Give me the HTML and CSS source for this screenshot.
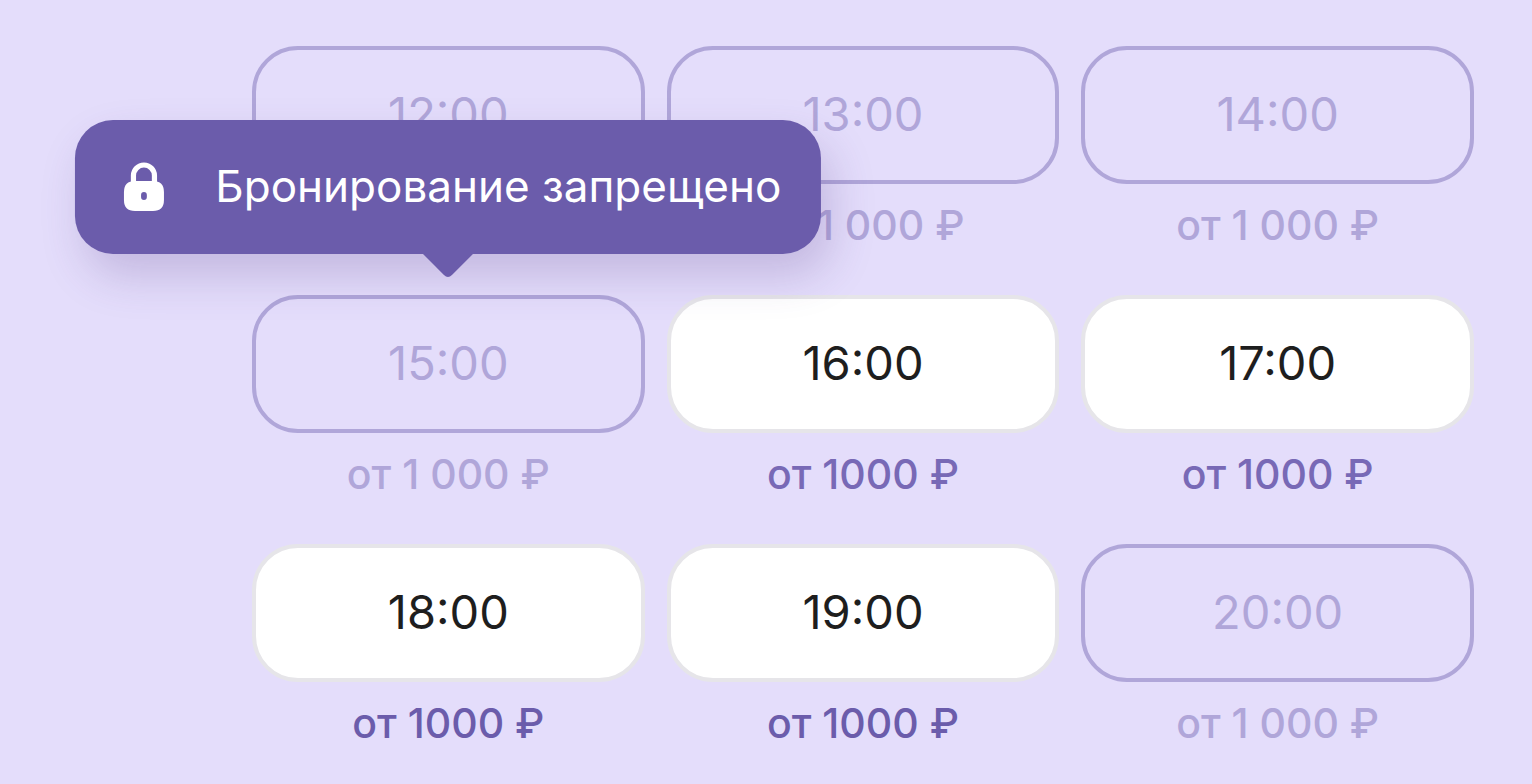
FILE: index.html
```html
<!DOCTYPE html>
<html lang="ru">
<head>
<meta charset="utf-8">
<meta name="viewport" content="width=device-width, initial-scale=1">
<title>Бронирование</title>
<link rel="stylesheet" href="styles.css">
</head>
<body>
<main class="slots">
  <div class="slot"><button class="time" type="button" disabled>12:00</button><span class="price muted">от 1 000 ₽</span></div>
  <div class="slot"><button class="time" type="button" disabled>13:00</button><span class="price muted">от 1 000 ₽</span></div>
  <div class="slot"><button class="time" type="button" disabled>14:00</button><span class="price muted">от 1 000 ₽</span></div>
  <div class="slot">
    <button class="time" type="button" disabled aria-describedby="tip">15:00</button><span class="price muted">от 1 000 ₽</span>
    <div class="tooltip" id="tip" role="tooltip">
      <svg class="lock" viewBox="0 0 42 50" aria-hidden="true">
        <path d="M10.500 22V14.500a10.500 10.500 0 0 1 21 0V22" fill="none" stroke="#fff" stroke-width="5.200"/>
        <path fill="#fff" fill-rule="evenodd" d="M12 20H30Q41 20 41 31V39Q41 50 30 50H12Q1 50 1 39V31Q1 20 12 20ZM21 31a2.900 2.900 0 0 0-2.900 2.900v2.200a2.900 2.900 0 0 0 5.800 0v-2.200A2.900 2.900 0 0 0 21 31Z"/>
      </svg>
      <span>Бронирование запрещено</span>
      <svg class="tail" viewBox="0 0 50 24" aria-hidden="true"><path fill="#6b5cab" d="M0 0H50L29 21Q25 25 21 21Z"/></svg>
    </div>
  </div>
  <div class="slot"><button class="time" type="button">16:00</button><span class="price soft">от 1000 ₽</span></div>
  <div class="slot"><button class="time" type="button">17:00</button><span class="price soft">от 1000 ₽</span></div>
  <div class="slot"><button class="time" type="button">18:00</button><span class="price">от 1000 ₽</span></div>
  <div class="slot"><button class="time" type="button">19:00</button><span class="price">от 1000 ₽</span></div>
  <div class="slot"><button class="time" type="button" disabled>20:00</button><span class="price muted">от 1 000 ₽</span></div>
</main>
</body>
</html>
```
FILE: styles.css
```css
* {
  box-sizing: border-box;
}

body {
  margin: 0;
  background: #e4ddfb;
  font-family: Inter, "Liberation Sans", sans-serif;
}

.slots {
  display: grid;
  grid-template-columns: repeat(3, 1fr);
  gap: 46px 22px;
  padding: 46px 58px 36px 252px;
}

.slot {
  position: relative;
  display: flex;
  flex-direction: column;
  gap: 17px;
}

.time {
  height: 138px;
  padding: 0 0 2px;
  border: 4px solid #e6e5e9;
  border-radius: 46px;
  background: #fff;
  color: #1e1e1e;
  font: 400 47px/56px Inter, "Liberation Sans", sans-serif;
}

.time:disabled {
  border-color: #b0a6d9;
  background: transparent;
  color: #b0a6d9;
}

.price {
  color: #6b5cab;
  font-size: 41px;
  font-weight: 500;
  line-height: 48px;
  text-align: center;
  white-space: nowrap;
}

.soft {
  color: #7869b6;
}

.muted {
  color: #b0a6d9;
}

.tooltip {
  position: absolute;
  z-index: 1;
  left: 50%;
  bottom: calc(100% + 41px);
  display: flex;
  align-items: center;
  gap: 50px;
  height: 134px;
  padding: 0 40px 2px 48px;
  border-radius: 38px;
  background: #6b5cab;
  box-shadow: 10px 22px 44px rgba(80, 55, 130, 0.22);
  color: #fff;
  font-size: 44px;
  font-weight: 400;
  line-height: 54px;
  white-space: nowrap;
  transform: translateX(-50%);
}

.lock {
  flex: none;
  width: 42px;
  height: 50px;
}

.tail {
  position: absolute;
  top: 100%;
  left: 50%;
  width: 50px;
  height: 24px;
  transform: translateX(-50%);
}
```
